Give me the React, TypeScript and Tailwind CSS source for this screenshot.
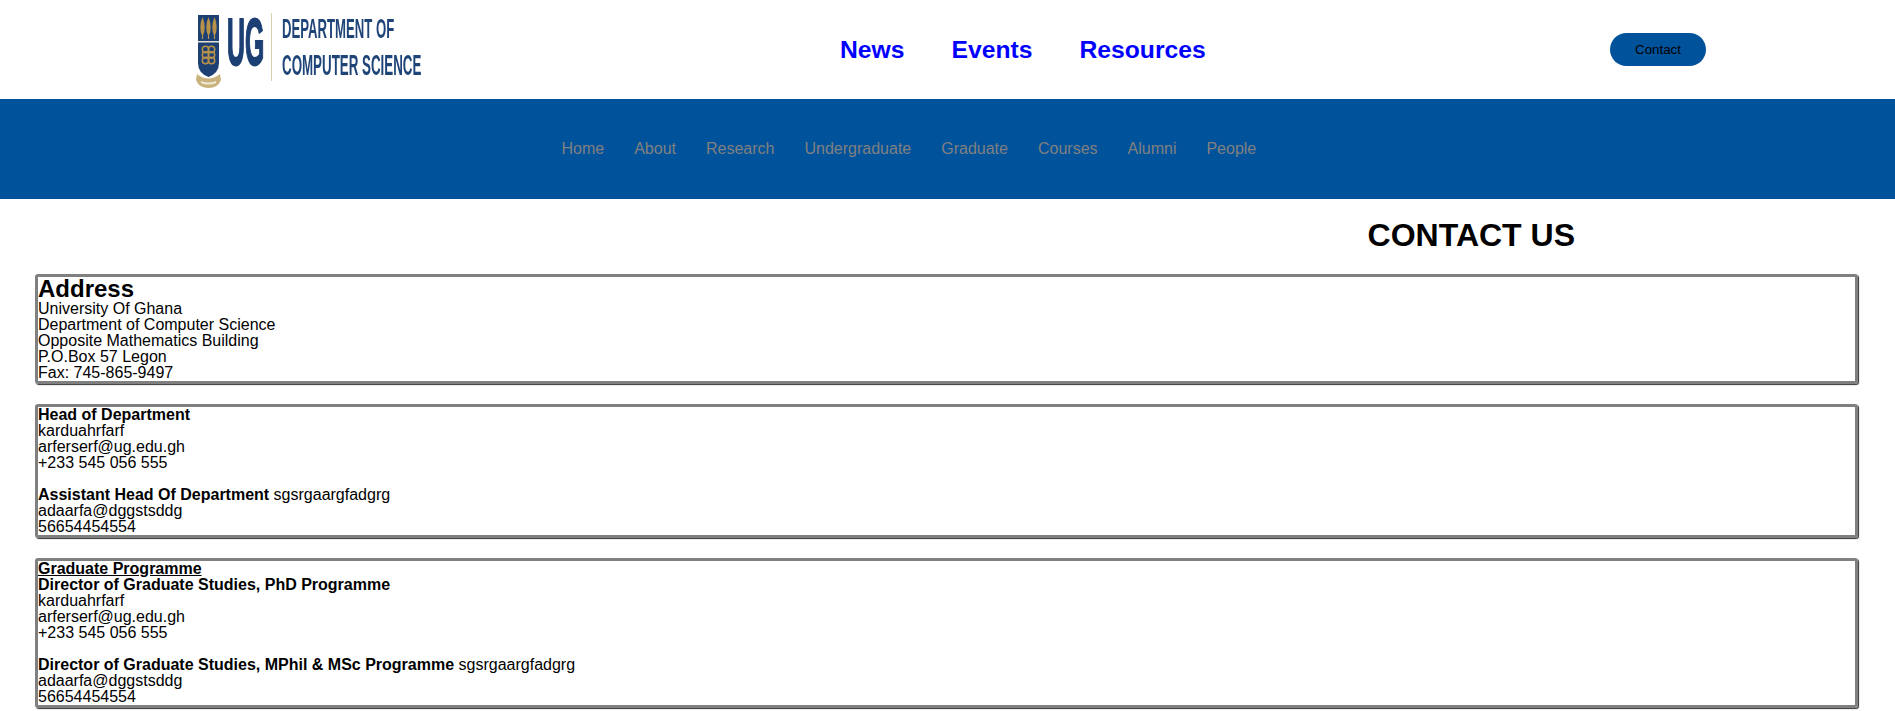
const navLinks = ["Home", "About", "Research", "Undergraduate", "Graduate", "Courses", "Alumni", "People"];

const navy = "#1c3f74";
const gold = "#b8924a";

const Logo = () => (
  <svg width="230" height="80" viewBox="0 0 230 80" className="block overflow-visible blur-[0.4px]">
    {/* shield */}
    <path d="M2 5h21v48q0 10-10.5 14Q2 63 2 53z" fill={navy} />
    <path d="M6.5 7q2.2 5 2.2 10t-1.6 8v4H5.900v-4q-1.600-3-1.600-8t2.200-10zM12.500 7q2.200 5 2.200 10t-1.600 8v4h-1.200v-4q-1.600-3-1.600-8t2.200-10zM18.500 7q2.200 5 2.200 10t-1.600 8v4h-1.200v-4q-1.600-3-1.600-8t2.200-10z" fill={gold} />
    <path d="M2 31h21v1.500H2z" fill="#e6e2d3" />
    <g fill="none" stroke={gold} strokeWidth="1.500">
      <circle cx="9.500" cy="39.500" r="3.200" />
      <circle cx="15.500" cy="39.500" r="3.200" />
      <circle cx="9.500" cy="45" r="3.200" />
      <circle cx="15.500" cy="45" r="3.200" />
      <circle cx="9.500" cy="50.500" r="3.200" />
      <circle cx="15.500" cy="50.500" r="3.200" />
    </g>
    {/* ribbon */}
    <path d="M1 64q11 9 23 0l1 6q-3 8-12.500 8T0 70z" fill="#c9b27c" />
    <path d="M5 71q7.500 3 15 0v2q-7.500 3-15 0z" fill="#f1ecdc" />
    <text transform="translate(31 55) scale(0.37 1)" fontFamily="Liberation Sans" fontWeight="700" fontSize="67" fill={navy} stroke={navy} strokeWidth="2">
      UG
    </text>
    <path d="M75 3h1v68h-1z" fill="#d8ceb2" />
    <text transform="translate(86 28) scale(0.47 1)" fontFamily="Liberation Sans" fontWeight="700" fontSize="28" fill="#1f4478">
      DEPARTMENT OF
    </text>
    <text transform="translate(86 65) scale(0.445 1)" fontFamily="Liberation Sans" fontWeight="700" fontSize="30" fill="#1f4478">
      COMPUTER SCIENCE
    </text>
  </svg>
);

const Box = ({ children }: { children: React.ReactNode }) => (
  <div className="mb-5 rounded-[3px] border-[3px] border-[#808080] leading-4 shadow-[1px_1px_1px_#333333]">{children}</div>
);

export default function App() {
  return (
    <div className="h-[711px] overflow-hidden bg-white font-['Liberation_Sans',Arial,sans-serif] text-base text-black">
      <header className="flex h-[99px] items-center">
        <div className="ml-[196px] w-[230px]">
          <Logo />
        </div>
        <nav className="ml-[414px] flex gap-[47px] text-[24.7px] font-bold text-[#0000ff]">
          <a>News</a>
          <a>Events</a>
          <a>Resources</a>
        </nav>
        <button className="ml-auto mr-[189px] h-[33px] w-24 rounded-[17px] bg-[#00539b] text-[13.33px] text-black">Contact</button>
      </header>
      <nav className="flex h-[100px] items-center bg-[#00539b] pl-[561.5px]">
        <ul className="flex gap-[30px] text-[#808080]">
          {navLinks.map((link) => (
            <li key={link}>{link}</li>
          ))}
        </ul>
      </nav>
      <h1 className="mt-[18px] pr-[320px] text-right text-[32px] leading-[37px] font-bold">CONTACT US</h1>
      <div className="mt-5 mr-[37px] ml-[35px]">
        <Box>
          <h2 className="text-2xl leading-6 font-bold">Address</h2>
          University Of Ghana
          <br />
          Department of Computer Science
          <br />
          Opposite Mathematics Building
          <br />
          P.O.Box 57 Legon
          <br />
          Fax: 745-865-9497
        </Box>
        <Box>
          <b>Head of Department</b>
          <br />
          karduahrfarf
          <br />
          arferserf@ug.edu.gh
          <br />
          +233 545 056 555
          <br />
          <br />
          <b>Assistant Head Of Department</b> sgsrgaargfadgrg
          <br />
          adaarfa@dggstsddg
          <br />
          56654454554
        </Box>
        <Box>
          <b className="underline">Graduate Programme</b>
          <br />
          <b>Director of Graduate Studies, PhD Programme</b>
          <br />
          karduahrfarf
          <br />
          arferserf@ug.edu.gh
          <br />
          +233 545 056 555
          <br />
          <br />
          <b>Director of Graduate Studies, MPhil &amp; MSc Programme</b> sgsrgaargfadgrg
          <br />
          adaarfa@dggstsddg
          <br />
          56654454554
        </Box>
      </div>
    </div>
  );
}
